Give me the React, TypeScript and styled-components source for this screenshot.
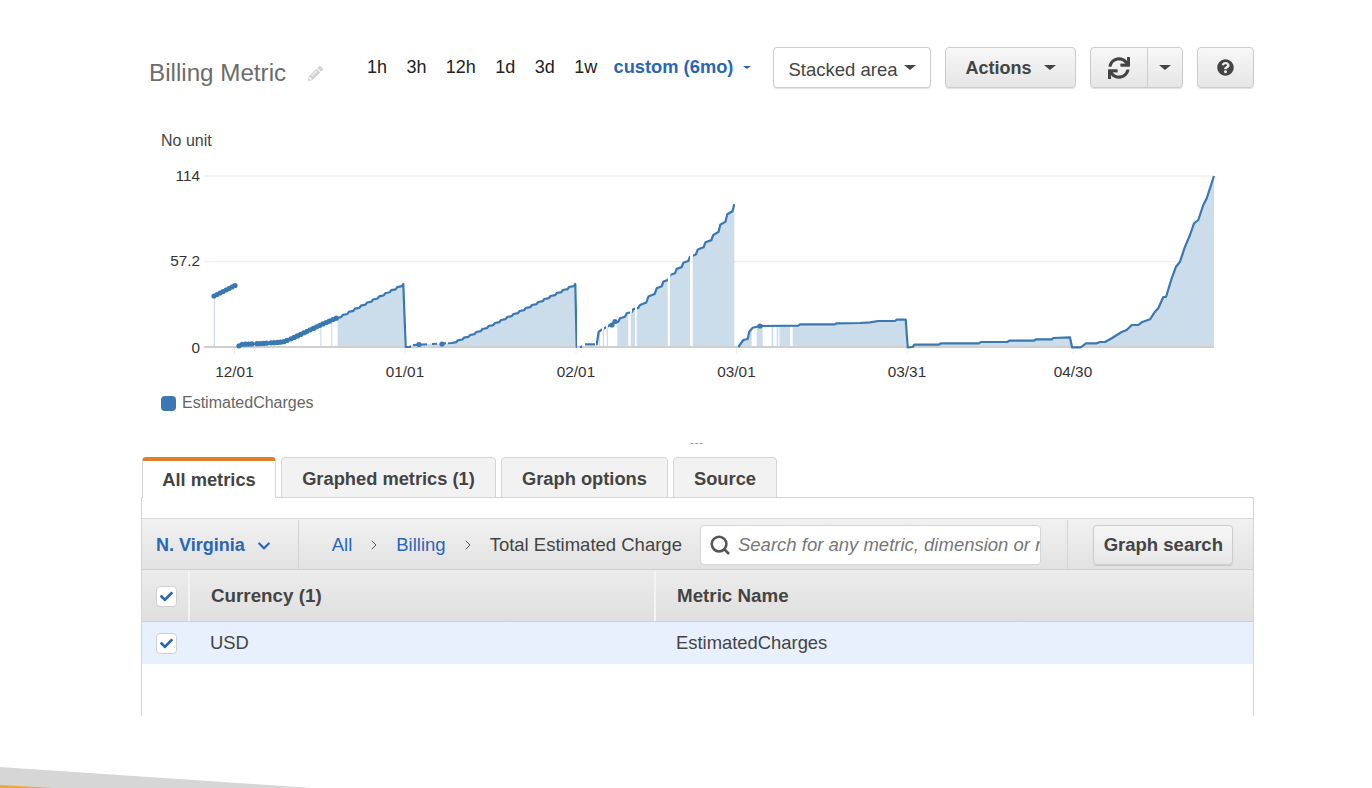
import styled, { createGlobalStyle } from 'styled-components';
import { FaCheck, FaChevronDown, FaPencilAlt, FaQuestionCircle, FaSync } from 'react-icons/fa';
import { ChevronRight, Search } from 'lucide-react';

const BASE = 347;

// page coordinates, the svg viewBox starts at the same origin
const LINE: number[][] = [
  [237, 347], [241.7, 344.3], [262, 343.5], [283, 342], [293, 338], [316.7, 326.7], [336.7, 318], [403.3, 284],
  [405.7, 347], [410, 347], [413, 345], [451.7, 343], [470, 335], [575.3, 284], [576.7, 347], [581, 347], [585, 344.3],
  [596.7, 344.3], [598.7, 331.7], [603, 329], [613.3, 323.3], [626.7, 313.3], [640, 305], [656.7, 288.3], [670, 275],
  [690, 256.7], [713.3, 235], [734.3, 204],
];
const LINE2: number[][] = [
  [738.3, 347], [743.3, 340], [747.7, 339], [749.3, 331.7], [752.7, 327.7], [760, 326], [798.3, 325.7], [800, 324.3],
  [835, 324.3], [836.7, 323.3], [860, 323], [870, 322.3], [878.3, 321], [895, 321], [896.7, 319.7], [905.7, 319.7],
  [907.7, 347.3], [912.7, 347], [914.3, 344.7], [939, 344.7], [940.7, 343.3], [979, 343.3], [980.7, 342], [1007.3, 342],
  [1009.3, 340.7], [1034, 340.7], [1035.7, 339.3], [1051.7, 339.3], [1053.3, 338], [1070, 337.3], [1072, 347.3],
  [1080.7, 347.3], [1086, 343.3], [1096.7, 343.3], [1100, 342], [1105, 342], [1111.7, 338.3], [1121.7, 332], [1126.7, 330],
  [1131.7, 325], [1138.3, 325], [1141.7, 322.3], [1150, 319.3], [1155, 311.7], [1158.3, 308.3], [1163.3, 297], [1166, 297],
  [1171.7, 278.3], [1176, 266.7], [1180, 261.7], [1185, 246.7], [1190, 235], [1194, 223.3], [1198.3, 220], [1203.3, 205],
  [1206.7, 198.3], [1214, 176],
];

const FILL_SPANS = [
  [213.5, 215], [320.3, 321.5], [331.2, 332.3], [337.7, 404], [410, 576], [598.5, 600], [602.7, 604], [606.7, 608],
  [617.3, 628.3], [630.7, 635], [636.7, 667.7], [670, 690], [692.7, 735], [740, 751.7], [756.7, 762.7], [771.7, 773.3],
  [776.7, 778.3], [779.5, 790], [792.7, 906], [912, 1072], [1080, 1214.5],
];
const LINE_SPANS = [
  [236, 257], [260, 267], [270, 288], [290, 320], [323, 330], [333, 404], [404, 411], [413, 427], [432, 437], [440, 446],
  [448, 577], [580, 582], [585, 595], [596, 602], [604, 606], [608, 630], [632, 635], [637, 668], [670.5, 690], [693, 735],
];
const DOT_SPANS = [
  [239, 253], [257, 267], [271, 288], [291, 320], [323, 330], [333, 337],
];
const TICKS = [
  { x: 234.5, label: '12/01' },
  { x: 405, label: '01/01' },
  { x: 576, label: '02/01' },
  { x: 736.5, label: '03/01' },
  { x: 907, label: '03/31' },
  { x: 1073, label: '04/30' },
];
const Y_LABELS = [
  { y: 175, label: '114' },
  { y: 260.5, label: '57.2' },
  { y: BASE, label: '0' },
];

const yAt = (pts: number[][], x: number) => {
  for (let i = 1; i < pts.length; i++) {
    const [x0, y0] = pts[i - 1];
    const [x1, y1] = pts[i];
    if (x >= x0 && x <= x1) return y0 + ((y1 - y0) * (x - x0)) / (x1 - x0);
  }
  return BASE;
};

const buildDots = () => {
  const dots: number[][] = [[419, 344.5], [442, 344], [612, 325], [615, 321.5], [760, 326]];
  for (let x = 214; x <= 235; x += 3) dots.push([x, 296 - ((x - 214) * 10.5) / 21]);
  DOT_SPANS.forEach(([a, b]) => {
    for (let x = a; x <= b; x += 3.2) dots.push([x, yAt(LINE, x)]);
  });
  return dots;
};
const DOTS = buildDots();

// the metric moves in small steps, so long slopes get little stairs
const stairs = (pts: number[][], step = 6) => {
  const out: number[][] = [pts[0]];
  for (let i = 1; i < pts.length; i++) {
    const [x0, y0] = pts[i - 1];
    const [x1, y1] = pts[i];
    const n = Math.floor((x1 - x0) / step);
    if (n >= 2 && Math.abs(y1 - y0) > 3) {
      for (let k = 1; k <= n; k++) {
        const xa = x0 + ((x1 - x0) * k) / n;
        const ya = y0 + ((y1 - y0) * k) / n;
        const prevY = y0 + ((y1 - y0) * (k - 1)) / n;
        out.push([xa - ((x1 - x0) / n) * 0.25, prevY + (ya - prevY) * 0.3], [xa, ya]);
      }
    } else {
      out.push(pts[i]);
    }
  }
  return out;
};

const toPath = (pts: number[][]) => pts.map(([x, y], i) => `${i ? 'L' : 'M'}${x.toFixed(1)} ${y.toFixed(1)}`).join(' ');
const toArea = (pts: number[][]) =>
  `${toPath(pts)} L${pts[pts.length - 1][0]} ${BASE} L${pts[0][0]} ${BASE} Z`;

const GlobalStyle = createGlobalStyle`
  html, body {
    margin: 0;
    padding: 0;
    background: #fff;
  }
`;

const Page = styled.div`
  position: relative;
  box-sizing: border-box;
  width: 1372px;
  height: 788px;
  padding: 47px 118px 0 142px;
  overflow: hidden;
  font-family: 'Liberation Sans', Arial, sans-serif;
  color: #444;
`;

const Header = styled.div`
  display: flex;
  align-items: flex-start;
  height: 41px;
`;

const TitleGroup = styled.div`
  display: flex;
  align-items: center;
  width: 225px;
  height: 28px;
  margin-top: 12px;
  padding-left: 7px;
  box-sizing: border-box;
  flex: none;
`;

const Title = styled.span`
  font-size: 24.2px;
  color: #6c6c6c;
`;

const PencilWrap = styled.span`
  display: flex;
  margin-left: 22px;
  color: #d4d4d4;
  font-size: 15px;
`;

const Ranges = styled.div`
  display: flex;
  align-items: center;
  gap: 19.4px;
  height: 40px;
  font-size: 18px;
  color: #222;
`;

const Custom = styled.span`
  display: flex;
  align-items: center;
  margin-left: -3px;
  font-size: 18.3px;
  font-weight: 700;
  color: #2a66b8;
`;

const Caret = styled.i<{ $size?: number; $color?: string; $gap?: number }>`
  display: inline-block;
  margin-left: ${({ $gap }) => $gap ?? 8}px;
  border-style: solid;
  border-width: ${({ $size }) => $size ?? 5}px ${({ $size }) => ($size ?? 5) + 1}px 0;
  border-color: ${({ $color }) => $color ?? '#444'} transparent transparent;
`;

const Actions = styled.div`
  display: flex;
  gap: 14px;
  margin-left: auto;
`;

const Button = styled.button<{ $width: number; $plain?: boolean }>`
  display: flex;
  align-items: center;
  justify-content: center;
  box-sizing: border-box;
  width: ${({ $width }) => $width}px;
  height: 41px;
  padding: 0;
  border: 1px solid #ccc;
  border-radius: 4px;
  background: ${({ $plain }) => ($plain ? '#fff' : 'linear-gradient(#f7f7f7, #e6e6e6)')};
  box-shadow: 0 1px 1px rgba(0, 0, 0, 0.12);
  font-family: inherit;
  font-size: ${({ $plain }) => ($plain ? '18.5px' : '18px')};
  font-weight: ${({ $plain }) => ($plain ? 400 : 700)};
  color: #444;
`;

const DropLabel = styled.span<{ $drop: number }>`
  margin-top: ${({ $drop }) => $drop}px;
`;

const SplitPart = styled.span<{ $width: number; $divided?: boolean }>`
  display: flex;
  align-items: center;
  justify-content: center;
  width: ${({ $width }) => $width}px;
  height: 100%;
  border-left: ${({ $divided }) => ($divided ? '1px solid #ccc' : 'none')};
`;

const UnitLabel = styled.div`
  margin-top: 45px;
  padding-left: 19px;
  font-size: 16px;
  line-height: 16px;
  color: #444;
`;

const ChartSvg = styled.svg`
  display: block;
  margin-top: 11px;
  font-family: 'Liberation Sans', Arial, sans-serif;
`;

const Legend = styled.div`
  display: flex;
  align-items: center;
  gap: 6px;
  height: 16px;
  margin-top: 13px;
  padding-left: 19px;
  font-size: 16px;
  color: #666;
`;

const Swatch = styled.span`
  width: 15px;
  height: 15px;
  border-radius: 4px;
  background: #3a78b4;
`;

const Splitter = styled.div`
  margin-top: 24px;
  height: 22px;
  padding-left: 548px;
  font-size: 12px;
  line-height: 16px;
  letter-spacing: 0.5px;
  color: #999;
`;

const Tabs = styled.div`
  display: flex;
  gap: 5px;
  height: 41px;
  margin-bottom: -1px;
`;

const Tab = styled.div<{ $active?: boolean; $width: number }>`
  position: relative;
  z-index: 1;
  display: flex;
  align-items: center;
  justify-content: center;
  box-sizing: border-box;
  width: ${({ $width }) => $width}px;
  padding-top: ${({ $active }) => ($active ? 0 : 3)}px;
  border: 1px solid #d5d5d5;
  border-top: ${({ $active }) => ($active ? '4px solid #dd7f2a' : '1px solid #d5d5d5')};
  border-bottom: ${({ $active }) => ($active ? 'none' : '1px solid #d5d5d5')};
  border-radius: 4px 4px 0 0;
  background: ${({ $active }) => ($active ? '#fff' : '#f2f2f2')};
  font-size: 18.3px;
  font-weight: 700;
  color: #444;
`;

const Panel = styled.div`
  box-sizing: border-box;
  height: 219px;
  margin-left: -1px;
  border: 1px solid #d5d5d5;
  border-bottom: none;
  padding-top: 20px;
`;

const Toolbar = styled.div`
  display: flex;
  align-items: center;
  box-sizing: border-box;
  height: 52px;
  padding-top: 1px;
  border-top: 1px solid #d9d9d9;
  border-bottom: 1px solid #d0d0d0;
  background: linear-gradient(#f1f1f1, #e2e2e2);
  font-size: 18.5px;
`;

const Region = styled.div`
  display: flex;
  align-items: center;
  gap: 12px;
  box-sizing: border-box;
  width: 157px;
  height: 100%;
  padding: 2px 0 0 14px;
  border-right: 1px solid #d2d2d2;
  font-size: 18px;
  font-weight: 700;
  color: #2a66b8;
`;

const Crumbs = styled.div`
  display: flex;
  align-items: center;
  width: 402px;
  padding-left: 33px;
  box-sizing: border-box;
  white-space: nowrap;
`;

const CrumbLink = styled.span`
  color: #2a66b8;
`;

const CrumbArrow = styled.span`
  display: flex;
  margin: 0 14px;
  color: #555;
`;

const SearchBox = styled.div`
  display: flex;
  align-items: center;
  gap: 7px;
  box-sizing: border-box;
  width: 342px;
  height: 40px;
  padding-left: 8px;
  border: 1px solid #d5d5d5;
  border-radius: 4px;
  background: #fff;
  overflow: hidden;
  font-style: italic;
  white-space: nowrap;
  color: #777;
`;

const GraphSearchCell = styled.div`
  display: flex;
  align-items: center;
  box-sizing: border-box;
  margin-left: 26px;
  padding-left: 25px;
  width: 186px;
  height: 100%;
  border-left: 1px solid #d5d5d5;
`;

const GraphSearch = styled(Button)`
  height: 40px;
  font-size: 18.5px;
`;

const HeaderRow = styled.div`
  display: flex;
  box-sizing: border-box;
  height: 52px;
  padding-top: 1px;
  border-bottom: 1px solid #d0d0d0;
  background: linear-gradient(#ececec, #dfdfdf);
  font-size: 18.8px;
  font-weight: 700;
`;

const HeaderCell = styled.div<{ $width?: number; $pad?: number }>`
  display: flex;
  align-items: center;
  box-sizing: border-box;
  width: ${({ $width }) => ($width ? `${$width}px` : 'auto')};
  padding-left: ${({ $pad }) => $pad ?? 0}px;
  border-right: ${({ $width }) => ($width ? '2px solid #f4f4f4' : 'none')};
  white-space: pre;
`;

const DataRow = styled.div`
  display: flex;
  align-items: center;
  height: 42px;
  background: #e8f0fd;
  font-size: 18.4px;
`;

const DataCell = styled.div<{ $width: number; $pad: number }>`
  width: ${({ $width }) => $width}px;
  padding-left: ${({ $pad }) => $pad}px;
  box-sizing: border-box;
`;

const Check = styled.span`
  display: flex;
  align-items: center;
  justify-content: center;
  box-sizing: border-box;
  width: 21px;
  height: 21px;
  margin-left: 14px;
  border: 1px solid #d0d0d0;
  border-radius: 4px;
  background: #fff;
  color: #2a66b8;
  font-size: 13px;
`;

const CheckCell = styled.div<{ $width: number }>`
  display: flex;
  align-items: center;
  box-sizing: border-box;
  width: ${({ $width }) => $width}px;
  flex: none;
`;

const SlideGrey = styled.div`
  position: absolute;
  left: 0;
  bottom: 0;
  width: 312px;
  height: 21px;
  background: #d6d6d6;
  clip-path: polygon(0 0, 100% 100%, 0 100%);
`;

const SlideOrange = styled.div`
  position: absolute;
  left: 0;
  bottom: 0;
  width: 54px;
  height: 3px;
  background: #eea93a;
  clip-path: polygon(0 0, 100% 100%, 0 100%);
`;

function Chart() {
  const first = stairs(LINE);
  const second = stairs(LINE2);
  return (
    <ChartSvg width={1112} height={222} viewBox="142 160 1112 222">
      <defs>
        <clipPath id="fillSpans">
          {FILL_SPANS.map(([a, b]) => (
            <rect key={a} x={a} y={160} width={b - a} height={BASE - 160} />
          ))}
        </clipPath>
        <clipPath id="lineSpans">
          {LINE_SPANS.map(([a, b]) => (
            <rect key={a} x={a} y={160} width={b - a} height={BASE - 158} />
          ))}
        </clipPath>
      </defs>
      <line x1={204} x2={1214} y1={176} y2={176} stroke="#efefef" strokeWidth={1.5} />
      <line x1={204} x2={1214} y1={261.5} y2={261.5} stroke="#efefef" strokeWidth={1.5} />
      {TICKS.map(t => (
        <line key={t.x} x1={t.x} x2={t.x} y1={BASE} y2={354} stroke="#eee" />
      ))}
      <g clipPath="url(#fillSpans)" fill="#cbdcea">
        <path d={`M213.5 296 L236 285 L236 ${BASE} L213.5 ${BASE} Z`} />
        <path d={toArea(first)} />
        <path d={toArea(second)} />
      </g>
      <line x1={204} x2={1214} y1={BASE} y2={BASE} stroke="#cfcfcf" strokeWidth={2} />
      <g fill="none" stroke="#3a78b4" strokeWidth={2.2} strokeLinejoin="round">
        <path d={toPath(first)} clipPath="url(#lineSpans)" />
        <path d={toPath(second)} />
      </g>
      <g fill="#3a78b4">
        {DOTS.map(([x, y]) => (
          <circle key={`${x}-${y}`} cx={x} cy={y} r={2.6} />
        ))}
      </g>
      <g fontSize={15.3} fill="#333" textAnchor="end" dominantBaseline="central">
        {Y_LABELS.map(l => (
          <text key={l.label} x={200} y={l.y}>
            {l.label}
          </text>
        ))}
      </g>
      <g fontSize={15.3} fill="#333" textAnchor="middle">
        {TICKS.map(t => (
          <text key={t.label} x={t.x} y={377}>
            {t.label}
          </text>
        ))}
      </g>
    </ChartSvg>
  );
}

export default function App() {
  return (
    <Page>
      <GlobalStyle />
      <Header>
        <TitleGroup>
          <Title>Billing Metric</Title>
          <PencilWrap>
            <FaPencilAlt />
          </PencilWrap>
        </TitleGroup>
        <Ranges>
          <span>1h</span>
          <span>3h</span>
          <span>12h</span>
          <span>1d</span>
          <span>3d</span>
          <span>1w</span>
          <Custom>
            custom (6mo)
            <Caret $size={3} $color="#2a66b8" $gap={10} />
          </Custom>
        </Ranges>
        <Actions>
          <Button $width={158} $plain>
            <DropLabel $drop={4}>Stacked area</DropLabel>
            <Caret $gap={6} />
          </Button>
          <Button $width={131}>
            <DropLabel $drop={1}>Actions</DropLabel>
            <Caret $gap={12} />
          </Button>
          <Button $width={93}>
            <SplitPart $width={57}>
              <FaSync size={22} />
            </SplitPart>
            <SplitPart $width={35} $divided>
              <Caret $gap={0} />
            </SplitPart>
          </Button>
          <Button $width={57}>
            <FaQuestionCircle size={17} />
          </Button>
        </Actions>
      </Header>

      <UnitLabel>No unit</UnitLabel>
      <Chart />
      <Legend>
        <Swatch />
        EstimatedCharges
      </Legend>
      <Splitter>---</Splitter>

      <Tabs>
        <Tab $active $width={134}>
          All metrics
        </Tab>
        <Tab $width={215}>Graphed metrics (1)</Tab>
        <Tab $width={167}>Graph options</Tab>
        <Tab $width={104}>Source</Tab>
      </Tabs>
      <Panel>
        <Toolbar>
          <Region>
            N. Virginia
            <FaChevronDown size={14} />
          </Region>
          <Crumbs>
            <CrumbLink>All</CrumbLink>
            <CrumbArrow>
              <ChevronRight size={16} strokeWidth={1.5} />
            </CrumbArrow>
            <CrumbLink>Billing</CrumbLink>
            <CrumbArrow>
              <ChevronRight size={16} strokeWidth={1.5} />
            </CrumbArrow>
            Total Estimated Charge
          </Crumbs>
          <SearchBox>
            <Search size={22} strokeWidth={2.8} color="#555" style={{ flex: 'none' }} />
            Search for any metric, dimension or r
          </SearchBox>
          <GraphSearchCell>
            <GraphSearch $width={140}>Graph search</GraphSearch>
          </GraphSearchCell>
        </Toolbar>
        <HeaderRow>
          <HeaderCell $width={48}>
            <Check>
              <FaCheck />
            </Check>
          </HeaderCell>
          <HeaderCell $width={466} $pad={21}>
            Currency (1)
          </HeaderCell>
          <HeaderCell $pad={21}>Metric Name</HeaderCell>
        </HeaderRow>
        <DataRow>
          <CheckCell $width={48}>
            <Check>
              <FaCheck />
            </Check>
          </CheckCell>
          <DataCell $width={466} $pad={20}>
            USD
          </DataCell>
          <DataCell $width={500} $pad={20}>
            EstimatedCharges
          </DataCell>
        </DataRow>
      </Panel>
      <SlideGrey />
      <SlideOrange />
    </Page>
  );
}
